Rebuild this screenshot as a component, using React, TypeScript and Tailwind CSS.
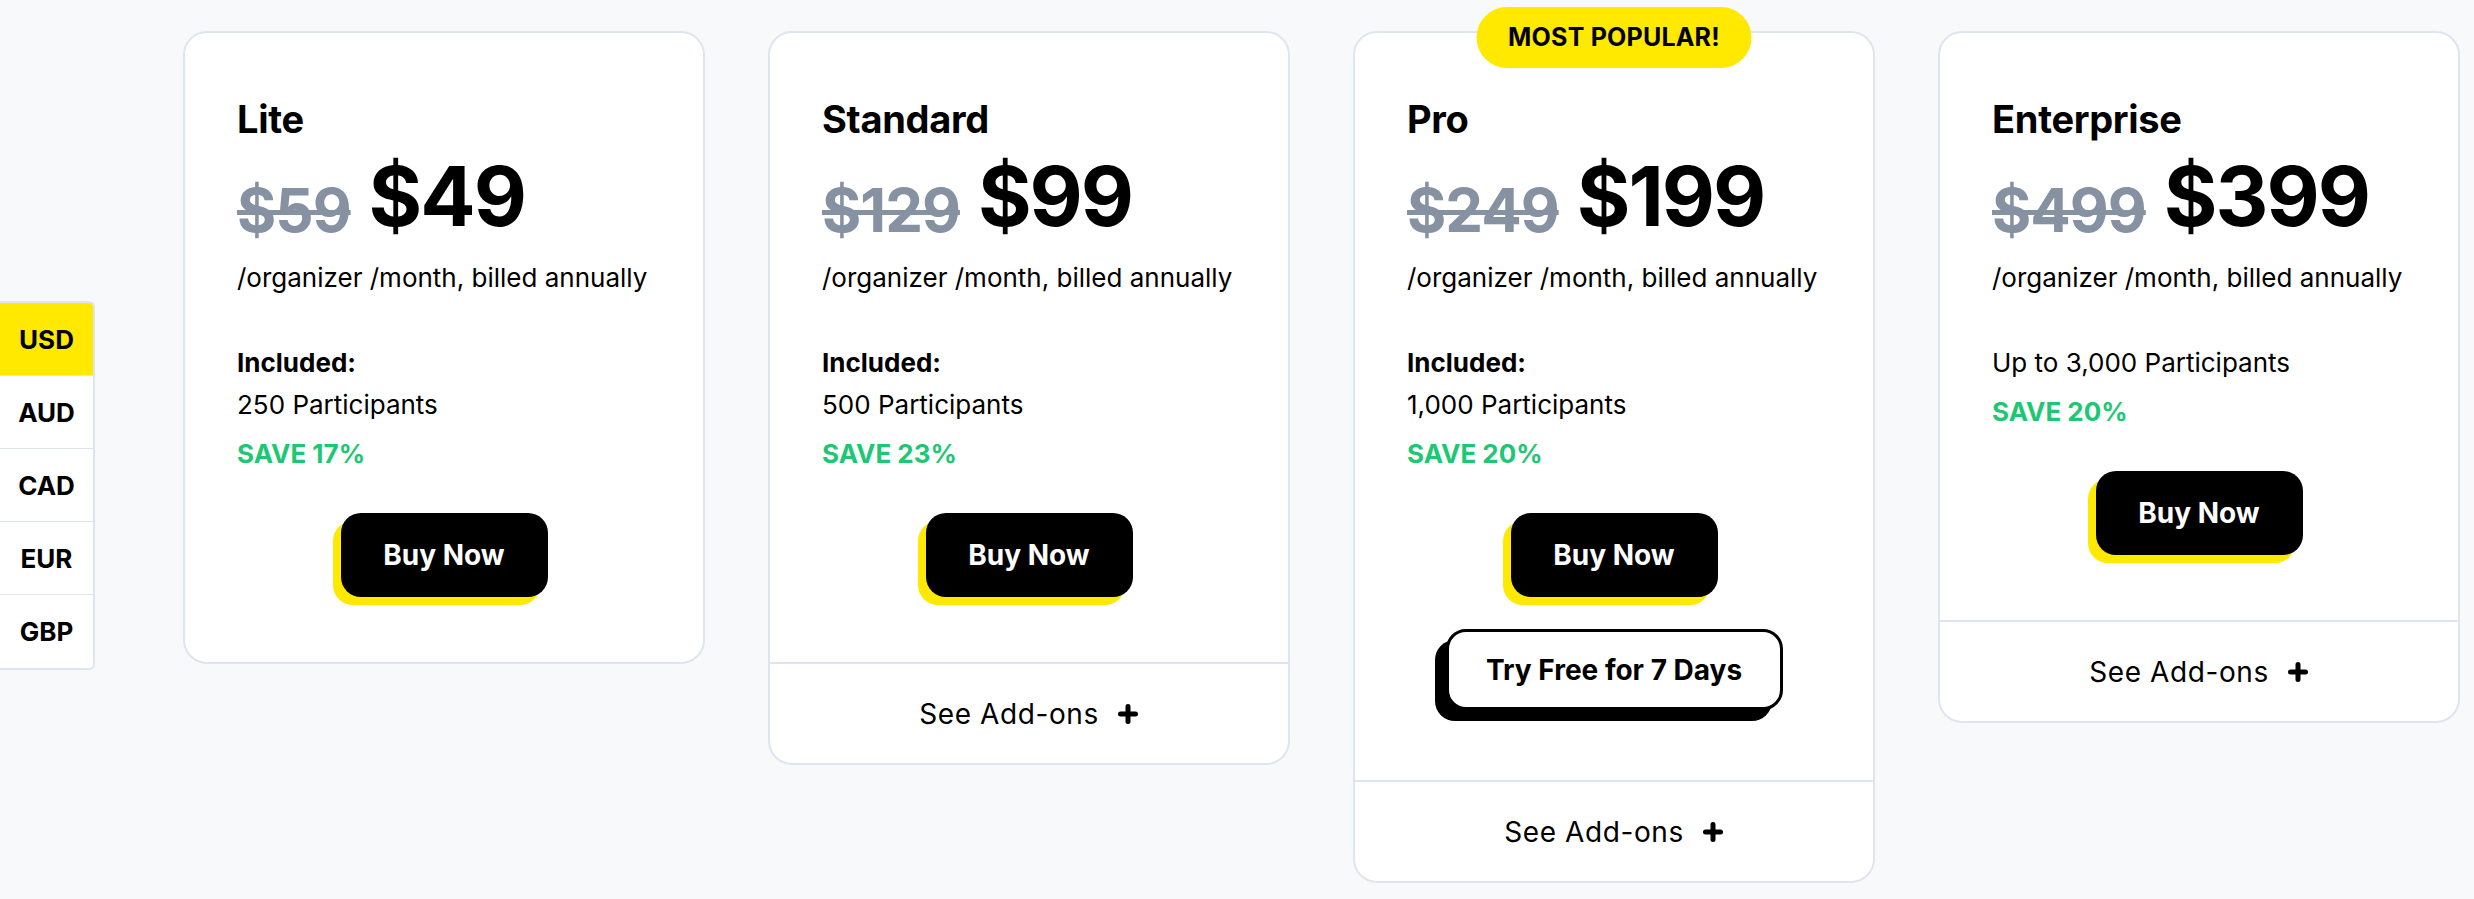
import React from "react";

type Plan = {
  name: string;
  oldPrice: string;
  price: string;
  included: boolean;
  participants: string;
  save: string;
  popular?: boolean;
  trial?: boolean;
  addons: boolean;
};

const plans: Plan[] = [
  { name: "Lite", oldPrice: "$59", price: "$49", included: true, participants: "250 Participants", save: "SAVE 17%", addons: false },
  { name: "Standard", oldPrice: "$129", price: "$99", included: true, participants: "500 Participants", save: "SAVE 23%", addons: true },
  { name: "Pro", oldPrice: "$249", price: "$199", included: true, participants: "1,000 Participants", save: "SAVE 20%", popular: true, trial: true, addons: true },
  { name: "Enterprise", oldPrice: "$499", price: "$399", included: false, participants: "Up to 3,000 Participants", save: "SAVE 20%", addons: true },
];

const currencies = ["USD", "AUD", "CAD", "EUR", "GBP"];

function Plus() {
  return (
    <svg width="22" height="22" viewBox="0 0 22 22" className="shrink-0">
      <path d="M11 3.5v15M3.5 11h15" stroke="#000" strokeWidth="5" strokeLinecap="round" />
    </svg>
  );
}

function Card({ plan }: { plan: Plan }) {
  return (
    <div className="relative w-[522px] shrink-0 bg-white border-2 border-[#dfe5ee] rounded-[24px]">
      {plan.popular && (
        <div className="absolute -top-[26px] left-1/2 -translate-x-1/2 w-[275px] h-[61px] rounded-full bg-[#ffe900] flex items-center justify-center text-[25px] font-bold text-black tracking-[0.2px]">
          MOST POPULAR!
        </div>
      )}
      <div className={`px-[52px] pt-[63px] ${plan.trial ? "pb-[70px]" : "pb-[65px]"}`}>
        <h3 className="text-[38px] leading-[46px] font-bold text-black tracking-[-0.3px]">{plan.name}</h3>
        <div className="mt-[14px] flex items-baseline gap-[18px]">
          <span className="relative top-[6px] text-[60px] leading-none font-bold text-[#8691a2] line-through decoration-[5px] tracking-[-1px]">
            {plan.oldPrice}
          </span>
          <span className="text-[82px] leading-none font-bold text-black tracking-[-2px]">{plan.price}</span>
        </div>
        <p className="mt-[19px] text-[26px] leading-[42px] text-black">/organizer /month, billed annually</p>
        <div className="mt-[43px]">
          {plan.included && <p className="text-[26px] leading-[42px] font-bold text-black">Included:</p>}
          <p className="text-[26px] leading-[42px] text-black">{plan.participants}</p>
          <p className="mt-[7px] text-[26px] leading-[42px] font-bold text-[#1ec773]">{plan.save}</p>
        </div>
        <div className="mt-[38px] flex flex-col items-center">
          <button className="w-[207px] h-[84px] rounded-[20px] bg-black text-white text-[28px] font-bold shadow-[-8px_8px_0_#ffe900]">
            Buy Now
          </button>
          {plan.trial && (
            <button className="mt-[32px] w-[337px] h-[81px] rounded-[20px] border-[3px] border-black bg-white text-black text-[28px] font-bold shadow-[-11px_11px_0_#000]">
              Try Free for 7 Days
            </button>
          )}
        </div>
      </div>
      {plan.addons && (
        <div className="h-[101px] border-t-2 border-[#dfe5ee] flex items-center justify-center gap-[18px]">
          <span className="text-[28px] text-black tracking-[0.6px]">See Add-ons</span>
          <Plus />
        </div>
      )}
    </div>
  );
}

export default function App() {
  return (
    <div className="min-h-[899px] w-full bg-[#f8f9fb] flex items-start font-['Inter',sans-serif]">
      <div className="mt-[301px] w-[95px] shrink-0 bg-white border-2 border-l-0 border-[#dfe5ee] rounded-r-[6px] overflow-hidden">
        {currencies.map((c, i) => (
          <div
            key={c}
            className={`h-[73px] flex items-center justify-center text-[26px] font-bold text-black ${
              i === 0 ? "bg-[#ffe900]" : ""
            } ${i < currencies.length - 1 ? "border-b border-[#dfe5ee]" : ""}`}
          >
            {c}
          </div>
        ))}
      </div>
      <div className="ml-[88px] mt-[31px] flex items-start gap-[63px]">
        {plans.map((p) => (
          <Card key={p.name} plan={p} />
        ))}
      </div>
    </div>
  );
}
